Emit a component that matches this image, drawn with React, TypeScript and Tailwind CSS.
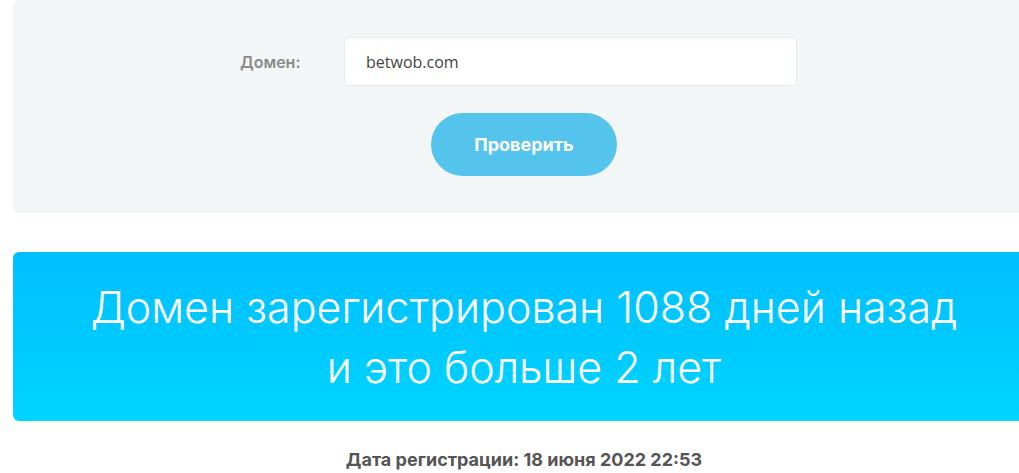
export default function App() {
  return (
    <div className="h-[473px] w-[1019px] overflow-hidden bg-white font-['Inter',sans-serif]">
      <div className="ml-[13px] w-[1022px]">
        <section className="flex h-[213px] flex-col items-center rounded-md bg-[#f3f6f7] pt-[37px]">
          <div className="mr-[11px] flex items-center">
            <label className="w-[104px] text-[16px] font-semibold text-[#8a8a8a]">Домен:</label>
            <div className="flex h-[49px] w-[453px] items-center rounded-[3px] border border-[#e8ecee] bg-white px-[21px] font-['Open_Sans',sans-serif] text-[16px] text-[#444]">
              betwob.com
            </div>
          </div>
          <button className="mt-[27px] h-[63px] w-[186px] rounded-full bg-[#55c4ed] text-[18px] font-bold text-white">
            Проверить
          </button>
        </section>

        <section className="mt-[39px] flex h-[169px] flex-col items-center justify-center rounded-md bg-gradient-to-b from-[#00bfff] to-[#00d4ff] text-center text-[43px] leading-[60px] font-light text-white">
          <p>Домен зарегистрирован 1088 дней назад</p>
          <p>и это больше 2 лет</p>
        </section>

        <p className="mt-[25px] text-center text-[18px] font-bold text-[#555]">
          Дата регистрации: 18 июня 2022 22:53
        </p>
      </div>
    </div>
  )
}
